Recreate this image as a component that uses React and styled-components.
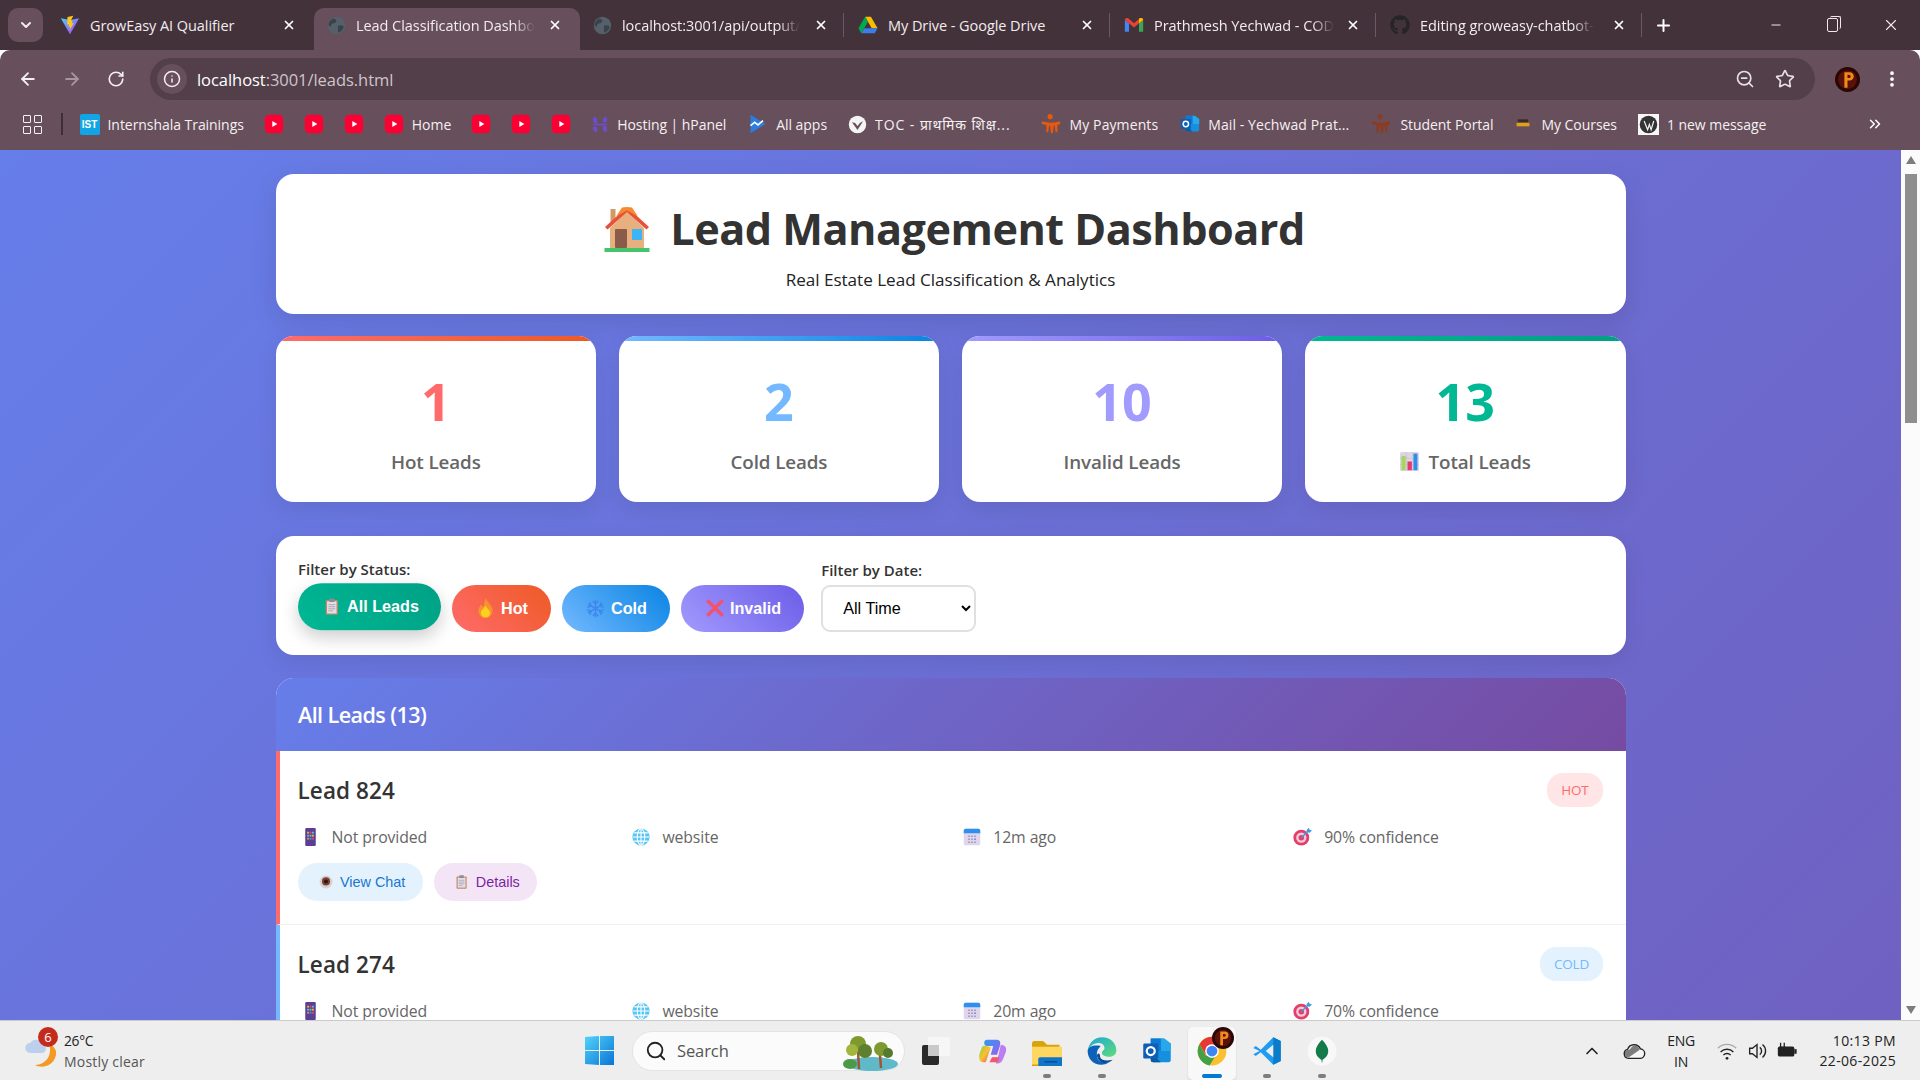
import React from 'react';
import styled, { createGlobalStyle } from 'styled-components';
import { ChevronDown, X, Plus, Minus, ArrowLeft, ArrowRight, RotateCw, Info, ZoomOut, Star, MoreVertical, ChevronsRight, ChevronUp, Search } from 'lucide-react';
import { FaGithub } from 'react-icons/fa';

const UI = `"Open Sans", "Noto Sans", sans-serif`;
const ARIAL = `"Liberation Sans", Arial, sans-serif`;

const Global = createGlobalStyle`
  html, body { margin: 0; height: 100%; overflow: hidden; }
  #root { height: 100vh; }
  * { box-sizing: border-box; }
`;

/* ---------- drawings ---------- */
const Svg = ({ s = 16, w, vb = '0 0 24 24', children }) => (
  <svg width={w || s} height={s} viewBox={vb} style={{ display: 'block', flex: 'none' }}>{children}</svg>
);
const VitePic = ({ s }) => (<Svg s={s}><defs><linearGradient id="vt" x1="0" y1="0" x2="1" y2="1"><stop offset="0" stopColor="#41d1ff" /><stop offset="1" stopColor="#bd34fe" /></linearGradient></defs><path d="M1 4l11 19L23 4l-11 2z" fill="url(#vt)" /><path d="M16 1l-7 1.5-.6 9 2.2-.5-.5 3.5 2-.5-.6 4.5 5-9-2.4.5.9-4-2 .5z" fill="#ffc517" /></Svg>);
const WorldPic = ({ s }) => (<Svg s={s}><circle cx="12" cy="12" r="11" fill="#55606a" /><path d="M8 3c4 1 5 3 3 5s-5 1-6 4-2 1-3-1c0-3 3-7 6-8zM15 12c3-1 6 0 6 2s-3 6-6 7c-2-1-1-3-1-5s-1-3 1-4z" fill="#39434c" /></Svg>);
const DrivePic = ({ s }) => (<Svg s={s}><path d="M8.5 2h7l8 14h-7z" fill="#fbbc04" /><path d="M8.5 2L.5 16l3.5 6 8-14z" fill="#00a84f" /><path d="M4 22h16l3.5-6h-16z" fill="#3b7de9" /></Svg>);
const GmailPic = ({ s }) => (<Svg s={s}><path d="M1 6v14h5V10z" fill="#4285f4" /><path d="M23 6v14h-5V10z" fill="#34a853" /><path d="M1 6c0-2 2-3 4-2l7 6 7-6c2-1 4 0 4 2l-5 4-6 5-6-5z" fill="#ea4335" /><path d="M18 4.500l1-.5c2-1 4 0 4 2l-5 4z" fill="#fbbc04" /></Svg>);
const YtPic = () => (<Svg s={20}><rect x="1" y="1" width="22" height="22" rx="5" fill="#fb0032" /><path d="M10 8.500l6 3.500-6 3.500z" fill="#fff" /></Svg>);
const IstPic = () => (<YtBase><span>IST</span></YtBase>);
const HostingerPic = () => (<Svg s={21} w={18}><path d="M3 1l5 3v7l-5-2zM21 1l-5 3v5h5zM3 11h18v2H3zM3 15h5v8l-5-3zM16 13l5 2v8l-5-3z" fill="#6c4dd8" /></Svg>);
const AllAppsPic = () => (<Svg s={22} w={20}><path d="M3 1l18 11L3 23z" fill="#2a7de1" /><path d="M3 14l5-4 4 3 6-5" stroke="#fff" strokeWidth="2" fill="none" /></Svg>);
const TocPic = () => (<Svg s={19}><circle cx="12" cy="12" r="11" fill="#f4f4f4" /><path d="M5 9l7 10 7-11-4 2-3 4-3-4z" fill="#67505b" /></Svg>);
const PayPic = ({ c = '#e8590c' }) => (<Svg s={22} w={22}><circle cx="11" cy="4" r="2.800" fill={c} /><path d="M2 9c6 2 14 2 20 0v3l-3 1v8h-2l-1-7h-1l-1 8h-2l-1-8h-1l-1 7H7v-8l-5-1z" fill={c} /></Svg>);
const OutlookPic = ({ s = 20 }) => (<Svg s={s}><path d="M7 2h10l6 4v13a2 2 0 01-2 2H9a2 2 0 01-2-2z" fill="#1490df" /><path d="M15 2h3l5 4v6h-8z" fill="#28a8ea" /><path d="M7 13l8 8H9a2 2 0 01-2-2z" fill="#0a5a9e" /><path d="M7 2h8v10H7z" fill="#0f78d4" /><rect x="1" y="6" width="12" height="12" rx="1" fill="#0c5fb5" /><circle cx="7" cy="12" r="3.200" fill="none" stroke="#fff" strokeWidth="1.800" /></Svg>);
const CoursePic = () => (<Svg s={14} w={20}><rect x="3" y="4" width="18" height="5" fill="#3a2b2b" /><rect x="1" y="10" width="22" height="6" fill="#e1a015" /></Svg>);
const WpPic = () => (<Svg s={21}><rect width="24" height="24" fill="#f7f7f7" /><circle cx="12" cy="12" r="10" fill="#333" /><path d="M7 8l4 10 2-6 2 6 3-10" stroke="#eee" strokeWidth="1.400" fill="none" /></Svg>);
const HousePic = () => (
  <Svg s={46} vb="0 0 46 46">
    <path d="M6 22L23 5l17 17v20H6z" fill="#e8b07f" />
    <rect x="6.500" y="3" width="5" height="13" fill="#d39a63" />
    <path d="M1 21L23 1l22 20-2.500 2.500L23 6 3.500 23.500z" fill="#e8503a" />
    <path d="M18 1.500L23 1l5 .5 6 9-11-6-11 6z" fill="#f68a2e" />
    <rect x="11" y="23" width="12" height="19" rx="1" fill="#8a5a4b" />
    <rect x="28" y="23" width="10" height="11" rx="1" fill="#3db4f5" />
    <rect x="0.500" y="42" width="45" height="4" fill="#45c46b" />
  </Svg>
);
const ClipPic = ({ s = 17 }) => (<Svg s={s} w={s * 0.8} vb="0 0 20 24"><rect x="1" y="2" width="18" height="22" rx="1.500" fill="#b98a67" /><rect x="3" y="4" width="14" height="18" fill="#e3dde6" /><rect x="6" y="0" width="8" height="5" rx="1" fill="#8f8a96" /><path d="M5 9h10M5 12h10M5 15h10M5 18h7" stroke="#a9a3b3" strokeWidth="1.300" /></Svg>);
const FirePic = () => (<Svg s={20} w={15} vb="0 0 18 24"><path d="M9.500 0c1 5 8 8 8 15.500a8.500 8.500 0 01-17 0c0-4 2-5 3-8 1 2 2 3 3 3 1-3 1-7 3-10.500z" fill="#f8922c" /><path d="M9 9c1.500 4 5.500 5 5.500 9a5.500 5.500 0 01-11 0c0-4 4-5 5.500-9z" fill="#fdd020" /></Svg>);
const FlakePic = () => (<Svg s={19}><g stroke="#3f86ee" strokeWidth="1.700" fill="none"><path d="M12 1v22M2.500 6.500l19 11M21.500 6.500l-19 11" /><path d="M8.500 2.500L12 6l3.500-3.500M8.500 21.500L12 18l3.500 3.500M1.500 10.500L6.500 9 5 4M22.500 13.500L17.500 15 19 20M22.500 10.500L17.500 9 19 4M1.500 13.500L6.500 15 5 20" /></g></Svg>);
const CrossPic = () => (<Svg s={18}><path d="M3 3l18 18M21 3L3 21" stroke="#f4516f" strokeWidth="4.500" strokeLinecap="round" /></Svg>);
const ChartPic = () => (<Svg s={19}><rect width="24" height="24" rx="2" fill="#dcd6e4" /><path d="M8 0v24M16 0v24M0 8h24M0 16h24" stroke="#c3bccf" strokeWidth=".800" /><rect x="2" y="5" width="5" height="18" fill="#a5d85a" /><rect x="9.500" y="12" width="5.500" height="11" fill="#e8386d" /><rect x="17" y="2" width="5" height="21" fill="#2f8fe8" /></Svg>);
const PhonePic = () => (<Svg s={18} w={13} vb="0 0 14 24"><rect width="14" height="24" rx="1.500" fill="#5b3f93" /><g><rect x="2.500" y="5" width="2.500" height="2.500" fill="#f3b234" /><rect x="5.800" y="5" width="2.500" height="2.500" fill="#e0466e" /><rect x="9" y="5" width="2.500" height="2.500" fill="#4cc1e8" /><rect x="2.500" y="9" width="2.500" height="2.500" fill="#4cc1e8" /><rect x="5.800" y="9" width="2.500" height="2.500" fill="#6fd06b" /><rect x="9" y="9" width="2.500" height="2.500" fill="#f3b234" /><rect x="2.500" y="13" width="2.500" height="2.500" fill="#f28a3d" /><rect x="5.800" y="13" width="2.500" height="2.500" fill="#4c8df0" /><rect x="9" y="13" width="2.500" height="2.500" fill="#e0466e" /></g></Svg>);
const GlobePic = () => (<Svg s={18}><circle cx="12" cy="12" r="11.500" fill="#58c6f5" /><g fill="none" stroke="#fff" strokeWidth="1.400"><ellipse cx="12" cy="12" rx="5" ry="11" /><path d="M12 1v22M1 12h22M3 6.500h18M3 17.500h18" /></g></Svg>);
const CalPic = () => (<Svg s={18}><rect x="1" y="1" width="22" height="22" rx="2.500" fill="#dfd5ec" /><path d="M1 7V3.500A2.500 2.500 0 013.500 1h17A2.500 2.500 0 0123 3.500V7z" fill="#2f8ff0" /><g fill="#9b90ad"><rect x="7" y="10" width="2" height="2" /><rect x="11" y="10" width="2" height="2" /><rect x="15" y="10" width="2" height="2" /><rect x="7" y="14" width="2" height="2" /><rect x="11" y="14" width="2" height="2" /><rect x="15" y="14" width="2" height="2" fill="#2f8ff0" /><rect x="7" y="18" width="2" height="2" /><rect x="11" y="18" width="2" height="2" /><rect x="15" y="18" width="2" height="2" /></g></Svg>);
const TargetPic = () => (<Svg s={19}><circle cx="10.500" cy="13.500" r="10" fill="#e23f6c" /><circle cx="10.500" cy="13.500" r="6.500" fill="#f3cdd6" /><circle cx="10.500" cy="13.500" r="3.500" fill="#e23f6c" /><path d="M10.500 13.500L20 4" stroke="#3d9be9" strokeWidth="1.800" /><path d="M17 4l3-3 1 2.500 3 .8-3 3-3-.8z" fill="#3d9be9" /></Svg>);
const EyePic = () => (<Svg s={14}><circle cx="12" cy="12" r="11" fill="#d8d0d2" /><circle cx="12" cy="11" r="7" fill="#7a4035" /><circle cx="12" cy="11" r="3.500" fill="#2a1510" /></Svg>);
const WeatherPic = () => (<Svg s={34} w={32} vb="0 0 32 34"><path d="M24 10c3 8 0 20-14 21 5 3 18 3 21-10 1-5-2-9-7-11z" fill="#f49a24" /><path d="M5 19a5 5 0 01.5-10 6 6 0 0111 1 4.500 4.500 0 010 9z" fill="#bcd0ee" /></Svg>);
const WinPic = () => (<Svg s={29} w={29} vb="0 0 29 29"><defs><linearGradient id="wn" x1="0" y1="0" x2="1" y2="1"><stop offset="0" stopColor="#52d3fa" /><stop offset="1" stopColor="#0a74d6" /></linearGradient></defs><path d="M0 1l14-1v14H0zM15 0h14v14H15zM0 15h14v14l-14-1zM15 15h14v14H15z" fill="url(#wn)" /></Svg>);
const ScenePic = () => (<Svg s={40} w={56} vb="0 0 56 40"><ellipse cx="30" cy="33" rx="26" ry="7" fill="#5fb9c9" /><path d="M16 20l1 18M38 24l1 13" stroke="#a3552f" strokeWidth="2.500" /><circle cx="16" cy="13" r="8" fill="#7e9a2e" /><circle cx="10" cy="19" r="6" fill="#a2b63d" /><circle cx="23" cy="20" r="7" fill="#5c8030" /><circle cx="39" cy="18" r="7" fill="#7e9a2e" /><circle cx="46" cy="22" r="5" fill="#557a2d" /><ellipse cx="8" cy="33" rx="7" ry="5" fill="#4c9a48" /></Svg>);
const TaskViewPic = () => (<Svg s={28} w={30} vb="0 0 30 28"><rect x="7" y="0" width="22" height="19" rx="2" fill="#f6f6f6" /><rect x="1" y="8" width="17" height="20" rx="2" fill="#2a2a2a" /><rect x="7" y="8" width="11" height="11" fill="#c9c9c9" /></Svg>);
const CopilotPic = () => (<Svg s={30}><defs><linearGradient id="cpa" x1="0" y1="0" x2="1" y2="1"><stop offset="0" stopColor="#2e9bf0" /><stop offset="1" stopColor="#9a5cf0" /></linearGradient><linearGradient id="cpb" x1="0" y1="0" x2="1" y2="1"><stop offset="0" stopColor="#86d24e" /><stop offset=".5" stopColor="#f8c22e" /><stop offset="1" stopColor="#f0486b" /></linearGradient></defs><path d="M8 3h8c3 0 3 3 2 6l-2 6h-5l2-7H8C5 8 5 3 8 3z" fill="url(#cpa)" /><path d="M19 7c4 0 5 3 4 6l-2 5c-1 3-3 4-5 4h-1l2-6 2-9z" fill="#bb7df0" /><path d="M4 9c-1 3-3 6-2 9 0 2 1 3 4 3h1l2-6 2-6c-3-1-6-2-7 0z" fill="url(#cpb)" /><path d="M7 21h8c1 0 1 0 2-1l1-3h-6l-2 4z" fill="#f4566a" /></Svg>);
const FilesPic = () => (<Svg s={30}><path d="M0 6a2 2 0 012-2h7l3 3h10v17H0z" fill="#d9a30c" /><path d="M0 8h24v15H0z" fill="#fdd75f" transform="translate(0 1) scale(1.250 .95)" /><rect x="5" y="17" width="20" height="8" rx="1.500" fill="#1274c9" /><rect x="10" y="20" width="10" height="1.200" fill="#064f91" /></Svg>);
const EdgePic = () => (<Svg s={30}><defs><linearGradient id="eg" x1="0" y1="0" x2="1" y2="1"><stop offset="0" stopColor="#1aa7d8" /><stop offset="1" stopColor="#5fdc7a" /></linearGradient></defs><path d="M12 1c7 0 11.500 5 11.500 10.500 0 3-2.500 5-5.500 5s-6-1-6-3c0-2 2-2 2-4 0-3-3-4-5-4C5 5.500 1 9 .5 12 1 6 6 1 12 1z" fill="url(#eg)" /><path d="M.5 12C.5 18 5 23 11.500 23c2 0 4-.5 6-2-4 1-9 0-9.500-5C7.500 12 9 10 11 8c-5-1-10 0-10.500 4z" fill="#0c62b8" /><path d="M8 15c0 5 5 8 9.500 6 1-.5 2-1 3-2-4 1-9 1-10-2 0-3-1-4-2.500-2z" fill="#084a94" /></Svg>);
const ChromePic = () => (<Svg s={30}><circle cx="12" cy="12" r="11.500" fill="#fbc02d" /><path d="M12 .5A11.500 11.500 0 002 6.500l5 8.500 5-7h10A11.500 11.500 0 0012 .5z" fill="#e53935" /><path d="M2 6.500a11.500 11.500 0 008 17l5-8-8 0z" fill="#43a047" /><circle cx="12" cy="12" r="5.500" fill="#fff" /><circle cx="12" cy="12" r="4.300" fill="#3f86f4" /></Svg>);
const AvatarPic = ({ s }) => (<Svg s={s}><circle cx="12" cy="12" r="12" fill="#2a0705" /><circle cx="12" cy="12" r="9" fill="#5a1208" /><path d="M9 5h5a4 4 0 010 8h-2v7h-3zM12 7.500v3h1.500a1.500 1.500 0 000-3z" fill="#f08a1d" /></Svg>);
const VsPic = () => (<Svg s={30}><path d="M17 1l6 3v16l-6 3L7 13l-4 3-2-1.500 5-2.500-5-2.500L3 8l4 3z" fill="#1f9cf0" /><path d="M17 1v22l6-3V4z" fill="#0a7cc9" /><path d="M17 7l-6 5 6 5z" fill="#eeeeee" /></Svg>);
const MongoPic = () => (<Svg s={30}><circle cx="12" cy="12" r="11.500" fill="#f8f8f8" /><path d="M12 3c3 3 5 6 5 9 0 4-3 6-4.500 7l-.5 3-.5-3C10 18 7 16 7 12c0-3 2-6 5-9z" fill="#127b49" /></Svg>);
const CloudPic = () => (<Svg s={22} w={24}><path d="M6 20a5 5 0 01-1-9.800 7.500 7.500 0 0114-.5 5 5 0 01-1 10.300z" fill="#f5f5f5" stroke="#222" strokeWidth="1.500" /><path d="M6 19a4 4 0 010-8c2 0 3-5 7-5 3 0 5 3 5 5z" fill="#7c7c7c" /></Svg>);
const WifiPic = () => (<Svg s={22}><g fill="none" stroke="#222" strokeWidth="1.500"><path d="M2 9a14 14 0 0120 0" stroke="#aaa" /><path d="M5 13a10 10 0 0114 0" /><path d="M8 16.500a5.500 5.500 0 018 0" /></g><circle cx="12" cy="20" r="1.500" fill="#222" /></Svg>);
const VolPic = () => (<Svg s={22}><path d="M4 9h3l5-4v14l-5-4H4z" fill="none" stroke="#222" strokeWidth="1.500" /><path d="M15 8a5 5 0 010 8M18 5a9 9 0 010 14" fill="none" stroke="#222" strokeWidth="1.500" /></Svg>);
const BatPic = () => (<Svg s={22}><rect x="2" y="7" width="18" height="11" rx="2" fill="#222" /><rect x="20" y="10" width="2.500" height="5" fill="#222" /><path d="M5 3v5M9 3v5M3.500 8h7" stroke="#222" strokeWidth="1.400" /></Svg>);

/* ---------- window chrome ---------- */
const Shell = styled.div`display: flex; flex-direction: column; height: 100vh; overflow: hidden; font-family: ${UI};`;
const TabStrip = styled.div`display: flex; align-items: flex-end; height: 50px; background: #43323a; padding-left: 8px; position: relative;`;
const TabListBtn = styled.div`
  width: 35px; height: 34px; margin-bottom: 8px; margin-right: 5px; border-radius: 10px;
  background: #674f5b; color: #f2eaee; display: flex; align-items: center; justify-content: center;
`;
const Tab = styled.div`
  width: 266px; height: 42px; display: flex; align-items: center; padding: 0 0 8px 12px; position: relative;
  border-radius: 10px 10px 0 0; color: #f2ecef; font-size: 14.5px; letter-spacing: -0.06px;
  background: ${p => (p.$active ? '#674f5b' : 'transparent')};
  ${p => p.$sep && `&::after { content: ''; position: absolute; right: 2px; top: 5px; height: 24px; width: 1.5px; background: #6d5863; }`}
`;
const TabIcon = styled.span`width: 20px; display: flex; justify-content: center; flex: none; margin-right: 10px;`;
const TabTitleBox = styled.span`width: 186px; flex: none; display: flex;`;
const TabTitle = styled.span`
  white-space: nowrap;
  ${p => p.$fade && `mask-image: linear-gradient(to right, #000 88%, transparent);`}
`;
const TabClose = styled.span`margin-left: 6px; display: flex; color: #fff;`;
const NewTab = styled.div`margin-left: 10px; height: 42px; padding-bottom: 8px; display: flex; align-items: center; color: #fff;`;
const WinCtrls = styled.div`margin-left: auto; height: 50px; display: flex; align-items: center; color: #f0e8ec; padding-right: 20px; gap: 43.8px;`;
const RestoreIcon = styled.span`
  width: 11px; height: 14px; border: 1.3px solid #f0e8ec; border-radius: 2px; position: relative; display: block;
  &::after { content: ''; position: absolute; top: -3px; left: 2px; width: 10px; height: 12px; border: 1.300px solid #f0e8ec; border-left: 0; border-bottom: 0; border-radius: 2px; }
`;
const Toolbar = styled.div`height: 58px; background: #674f5b; border-radius: 10px 10px 0 0; display: flex; align-items: center; padding: 0 18px; color: #f4eef1;`;
const NavBtn = styled.span`width: 20px; display: flex; justify-content: center; margin-right: ${p => p.$mr || 24}px; color: ${p => (p.$off ? '#a8959f' : '#f4eef1')};`;
const Omnibox = styled.div`flex: 1; height: 42px; margin-right: 20px; border-radius: 21px; background: #523f4a; display: flex; align-items: center; padding: 0 20px 0 7px;`;
const InfoChip = styled.span`width: 30px; height: 30px; border-radius: 50%; background: #674f5b; display: flex; align-items: center; justify-content: center; margin-right: 10px;`;
const Url = styled.span`font-size: 16.5px; letter-spacing: -0.05px; color: #cfc5ca; flex: 1; b { font-weight: 400; color: #fff; }`;
const OmniIcons = styled.span`display: flex; gap: 20px; align-items: center; color: #e8dfe3;`;
const MenuBtn = styled.span`margin-left: 22px; display: flex; color: #fff;`;
const Bookmarks = styled.div`height: 42px; padding: 0 0 10px 23px; background: #674f5b; display: flex; align-items: center; gap: 20px; color: #f5f0f2; font-size: 14px;`;
const AppsGrid = styled.span`display: grid; grid-template-columns: 8px 8px; gap: 3px; span { border: 1.600px solid #f5f0f2; height: 8px; border-radius: 1px; }`;
const BarSep = styled.span`width: 1.500px; height: 22px; background: #3e2e36; margin: 0 -3px 0 -1px;`;
const Mark = styled.span`display: flex; align-items: center; gap: 8px; white-space: nowrap; flex: none; letter-spacing: ${p => p.$ls ?? -0.05}px; margin-left: ${p => p.$ml || 0}px;`;
const YtBase = styled.span`
  width: 20px; height: 21px; border-radius: 2px; background: #12a5e6; color: #fff; display: flex; align-items: center; justify-content: center;
  font: 700 10px ${ARIAL}; letter-spacing: 0;
`;
const MoreMarks = styled.span`margin-left: auto; padding-right: 36px; display: flex; color: #fff;`;

/* ---------- page ---------- */
const PageRow = styled.div`flex: 1; min-height: 0; display: flex;`;
const Viewport = styled.div`flex: 1; overflow: hidden;`;
const PageBody = styled.div`min-height: 2937px; background: linear-gradient(135deg, #667eea 0%, #764ba2 100%); padding-top: 24px;`;
const Container = styled.div`width: 1350px; margin: 0 auto;`;
const Hero = styled.header`
  height: 140px; background: #fff; border-radius: 18px; text-align: center; padding-top: 29px;
  box-shadow: 0 9px 27px rgba(0,0,0,.1);
`;
const HeroTitle = styled.h1`
  margin: 0; font-size: 43.2px; line-height: 52px; font-weight: 700; color: #333; letter-spacing: -0.5px;
  display: flex; justify-content: center; align-items: center; gap: 20px; padding-left: 8px;
`;
const HeroSub = styled.p`margin: 13px 0 0; font-size: 17.1px; line-height: 24px; color: #222; letter-spacing: -0.02px;`;
const StatRow = styled.section`display: grid; grid-template-columns: repeat(4, 1fr); gap: 22.5px; margin-top: 22px;`;
const StatCard = styled.div`
  height: 166px; background: #fff; border-radius: 18px; overflow: hidden; text-align: center; position: relative;
  box-shadow: 0 7px 22px rgba(0,0,0,.08); padding-top: 32.5px;
  &::before { content: ''; position: absolute; left: 0; right: 0; top: 0; height: 4.5px; background: linear-gradient(90deg, ${p => p.$a}, ${p => p.$b}); }
`;
const StatValue = styled.div`font-size: 52px; line-height: 64px; font-weight: 700; color: ${p => p.$c};`;
const StatLabel = styled.div`
  margin-top: 16px; font-size: 18.8px; line-height: 26px; font-weight: 600; color: #666; letter-spacing: -0.1px;
  display: flex; justify-content: center; align-items: center; gap: 10px;
`;
const FilterCard = styled.section`
  margin-top: 34px; height: 119px; background: #fff; border-radius: 18px; padding: 22.5px; display: flex; align-items: flex-start; gap: 17px;
  box-shadow: 0 7px 22px rgba(0,0,0,.08);
`;
const FilterGroup = styled.div`display: flex; flex-direction: column; padding-top: ${p => p.$pt || 0}px;`;
const FilterLabel = styled.label`font-size: 15px; line-height: 20px; font-weight: 600; color: #333; letter-spacing: 0; margin-bottom: ${p => p.$mb || 6}px;`;
const FilterRow = styled.div`display: flex; gap: 11px;`;
const FilterBtn = styled.button`
  height: 47.5px; border: 0; border-radius: 24px; padding: 0 ${p => (p.$active ? 22 : 23)}px 0 23.5px; color: #fff; font: 700 16.2px ${ARIAL};
  display: flex; align-items: center; background: linear-gradient(45deg, ${p => p.$a}, ${p => p.$b});
  ${p => p.$active && `transform: translateY(-1.800px); box-shadow: 0 7px 18px rgba(0,0,0,.2);`}
`;
const BtnIcon = styled.span`width: 21px; margin-right: 4.5px; display: flex; justify-content: center;`;
const DateSelect = styled.select`
  width: 155px; height: 47px; border: 2.7px solid #e0e0e0; border-radius: 9px; background: #fff; color: #000;
  font: 400 16.2px ${ARIAL}; padding: 0 3px 0 16px;
`;
const LeadsPanel = styled.section`margin-top: 22.5px; background: #fff; border-radius: 18px; overflow: hidden;`;
const LeadsHead = styled.div`
  height: 73px; padding: 0 22.5px; display: flex; align-items: center; color: #fff;
  background: linear-gradient(135deg, #667eea 0%, #764ba2 100%);
`;
const LeadsTitle = styled.h2`margin: 0; font-size: 21.6px; font-weight: 600; letter-spacing: -0.6px;`;
const LeadItem = styled.article`
  height: 174px; padding: 22px 22.5px 0 18px; border-left: 4.5px solid ${p => p.$c}; border-bottom: 1.2px solid #f0f0f0;
`;
const LeadTop = styled.div`display: flex; justify-content: space-between; align-items: center; height: 34px;`;
const LeadName = styled.h3`margin: 0; padding-top: 2.5px; font-size: 22.5px; font-weight: 600; color: #333; letter-spacing: 0.1px;`;
const Badge = styled.span`
  height: 34px; display: flex; align-items: center; padding: 0 ${p => p.$px}px; border-radius: 16px;
  font-size: 13.5px; font-weight: 500; letter-spacing: -0.2px; color: ${p => p.$c}; background: ${p => p.$bg};
`;
const MetaGrid = styled.div`display: grid; grid-template-columns: repeat(4, 1fr); gap: 18px; margin-top: 19px;`;
const MetaItem = styled.div`display: flex; align-items: center; height: 22px; font-size: 15.8px; color: #666; letter-spacing: -0.1px;`;
const MetaIcon = styled.span`width: 25px; margin-right: 9px; display: flex; justify-content: center;`;
const ActionRow = styled.div`display: flex; gap: 10.5px; margin-top: 15px;`;
const ActionBtn = styled.button`
  height: 38px; border: 0; border-radius: 19px; padding: 1px ${p => p.$px}px 0; display: flex; align-items: center;
  font: 400 14.4px ${ARIAL}; color: ${p => p.$c}; background: ${p => p.$bg};
`;
const ActionIcon = styled.span`width: 20.5px; margin-right: 4px; display: flex; justify-content: center;`;
const ScrollBar = styled.div`width: 19px; background: #fbfbfb; display: flex; flex-direction: column; align-items: center;`;
const ScrollArrow = styled.span`
  flex: none; margin: ${p => (p.$down ? 'auto 0 6px' : '6px 0 10px')}; width: 0; height: 0; border-left: 5.5px solid transparent; border-right: 5.5px solid transparent;
  ${p => (p.$down ? 'border-top: 8px solid #7d7d7d;' : 'border-bottom: 8px solid #7d7d7d;')}
`;
const ScrollThumb = styled.span`width: 12px; height: 249px; background: #8e8e8e; flex: none;`;

/* ---------- taskbar ---------- */
const Taskbar = styled.footer`height: 60px; flex: none; background: #eeeeee; border-top: 1px solid #cbcbcb; display: flex; align-items: center; padding: 0 24px 0 25px; color: #222;`;
const Weather = styled.div`width: 560px; flex: none; display: flex; align-items: center; position: relative;`;
const WeatherBadge = styled.span`
  position: absolute; left: 13px; top: -3px; width: 20px; height: 20px; border-radius: 50%; background: #c42b1c; color: #fff;
  font-size: 13px; display: flex; align-items: center; justify-content: center;
`;
const WeatherText = styled.div`margin-left: 7px; font-size: 13.8px; line-height: 21px; letter-spacing: -0.3px; small { display: block; font-size: 14px; color: #555; letter-spacing: 0.2px; }`;
const SearchPill = styled.div`
  width: 273px; height: 40px; margin-left: 18px; margin-right: 16px; border-radius: 20px; background: #fbfbfb; border: 1px solid #e4e4e4;
  display: flex; align-items: center; padding: 0 6px 0 12px; font-size: 16.5px; color: #555; letter-spacing: -0.1px;
  svg:first-child { color: #222; }
  span { margin-left: 10px; flex: 1; }
`;
const AppIcon = styled.div`
  width: 30px; height: 30px; margin-left: ${p => p.$ml ?? 25}px; flex: none; position: relative;
  ${p => p.$tile && `&::before { content: ''; position: absolute; inset: -9px -9px -14px; border-radius: 5px; background: #f8f8f8; box-shadow: 0 1px 2px rgba(0,0,0,.12); }`}
  & > svg { position: relative; }
`;
const RunDot = styled.span`
  position: absolute; left: 50%; bottom: -12px; height: 4px; transform: translateX(-50%); border-radius: 2px;
  width: ${p => (p.$on ? 20 : 8)}px; background: ${p => (p.$on ? '#0078d4' : '#7d7d7d')};
`;
const AppBadge = styled.span`position: absolute; top: -9px; right: -7px;`;
const Tray = styled.div`margin-left: auto; display: flex; align-items: center; font-size: 14px; letter-spacing: -0.25px;`;
const TrayCell = styled.span`width: ${p => p.$w}px; margin-right: ${p => p.$mr}px; display: flex; justify-content: center; flex: none;`;
const Lang = styled.span`width: 36px; margin-right: 17px; text-align: center; line-height: 21px;`;
const Clock = styled.span`width: 98px; text-align: right; line-height: 20px; letter-spacing: 0.35px;`;

/* ---------- data ---------- */
const TABS = [
  { t: 'GrowEasy AI Qualifier', i: <VitePic s={20} /> },
  { t: 'Lead Classification Dashbo', i: <WorldPic s={19} />, active: true, fade: true },
  { t: 'localhost:3001/api/output/', i: <WorldPic s={19} />, sep: true, fade: true },
  { t: 'My Drive - Google Drive', i: <DrivePic s={20} />, sep: true },
  { t: 'Prathmesh Yechwad - COD', i: <GmailPic s={20} />, sep: true, fade: true },
  { t: 'Editing groweasy-chatbot-', i: <FaGithub size={20} color="#252525" />, sep: true, fade: true },
];
const MARKS = [
  { i: <IstPic />, t: 'Internshala Trainings' }, { i: <YtPic /> }, { i: <YtPic /> }, { i: <YtPic /> },
  { i: <YtPic />, t: 'Home' }, { i: <YtPic /> }, { i: <YtPic /> }, { i: <YtPic /> },
  { i: <HostingerPic />, t: 'Hosting | hPanel' }, { i: <AllAppsPic />, t: 'All apps', ml: 2 },
  { i: <TocPic />, t: 'TOC - प्राथमिक शिक्ष...', ls: 0.95, ml: 1 }, { i: <PayPic />, t: 'My Payments', ml: 9, ls: 0.1 },
  { i: <OutlookPic />, t: 'Mail - Yechwad Prat...', ml: 2, ls: 0.1 }, { i: <PayPic c="#8c3a22" />, t: 'Student Portal', ml: 1 },
  { i: <CoursePic />, t: 'My Courses' }, { i: <WpPic />, t: '1 new message', ml: 1 },
];
const STATS = [
  { v: 1, l: 'Hot Leads', a: '#ff6b6b', b: '#ee5a24', c: '#ff6b6b' },
  { v: 2, l: 'Cold Leads', a: '#74b9ff', b: '#0984e3', c: '#74b9ff' },
  { v: 10, l: 'Invalid Leads', a: '#a29bfe', b: '#6c5ce7', c: '#a29bfe' },
  { v: 13, l: 'Total Leads', a: '#00b894', b: '#00a085', c: '#00b894', icon: <ChartPic /> },
];
const FILTERS = [
  { l: 'All Leads', i: <ClipPic />, a: '#00b894', b: '#00a085', active: true },
  { l: 'Hot', i: <FirePic />, a: '#ff6b6b', b: '#ee5a24' },
  { l: 'Cold', i: <FlakePic />, a: '#74b9ff', b: '#0984e3' },
  { l: 'Invalid', i: <CrossPic />, a: '#a29bfe', b: '#6c5ce7' },
];
const LEADS = [
  { n: 'Lead 824', s: 'HOT', c: '#ff6b6b', bg: '#ffe5e5', px: 14.5, ago: '12m ago', conf: '90% confidence' },
  { n: 'Lead 274', s: 'COLD', c: '#74b9ff', bg: '#e3f2fd', px: 14, ago: '20m ago', conf: '70% confidence' },
];
const APPS = [
  { i: <CopilotPic />, ml: 26 }, { i: <FilesPic />, dot: true }, { i: <EdgePic />, dot: true }, { i: <OutlookPic s={30} /> },
  { i: <ChromePic />, tile: true, on: true, badge: true }, { i: <VsPic />, dot: true }, { i: <MongoPic />, dot: true },
];

export default function App() {
  return (
    <Shell>
      <Global />
      <TabStrip>
        <TabListBtn><ChevronDown size={16} strokeWidth={3} /></TabListBtn>
        {TABS.map(t => (
          <Tab key={t.t} $active={t.active} $sep={t.sep}>
            <TabIcon>{t.i}</TabIcon>
            <TabTitleBox><TabTitle $fade={t.fade}>{t.t}</TabTitle></TabTitleBox>
            <TabClose><X size={14} strokeWidth={3} /></TabClose>
          </Tab>
        ))}
        <NewTab><Plus size={19} strokeWidth={2.5} /></NewTab>
        <WinCtrls>
          <Minus size={14} />
          <RestoreIcon />
          <X size={18} strokeWidth={1.5} />
        </WinCtrls>
      </TabStrip>
      <Toolbar>
        <NavBtn><ArrowLeft size={20} strokeWidth={2.2} /></NavBtn>
        <NavBtn $off><ArrowRight size={20} strokeWidth={2.2} /></NavBtn>
        <NavBtn $mr={24}><RotateCw size={18} strokeWidth={2.2} /></NavBtn>
        <Omnibox>
          <InfoChip><Info size={18} /></InfoChip>
          <Url><b>localhost</b>:3001/leads.html</Url>
          <OmniIcons><ZoomOut size={20} /><Star size={20} /></OmniIcons>
        </Omnibox>
        <AvatarPic s={25} />
        <MenuBtn><MoreVertical size={20} strokeWidth={2.5} /></MenuBtn>
      </Toolbar>
      <Bookmarks>
        <AppsGrid><span /><span /><span /><span /></AppsGrid>
        <BarSep />
        {MARKS.map((m, idx) => (<Mark key={idx} $ls={m.ls} $ml={m.ml}>{m.i}{m.t && <span>{m.t}</span>}</Mark>))}
        <MoreMarks><ChevronsRight size={18} /></MoreMarks>
      </Bookmarks>

      <PageRow>
        <Viewport>
          <PageBody>
            <Container>
              <Hero>
                <HeroTitle><HousePic />Lead Management Dashboard</HeroTitle>
                <HeroSub>Real Estate Lead Classification &amp; Analytics</HeroSub>
              </Hero>
              <StatRow>
                {STATS.map(s => (
                  <StatCard key={s.l} $a={s.a} $b={s.b}>
                    <StatValue $c={s.c}>{s.v}</StatValue>
                    <StatLabel>{s.icon}{s.l}</StatLabel>
                  </StatCard>
                ))}
              </StatRow>
              <FilterCard>
                <FilterGroup>
                  <FilterLabel>Filter by Status:</FilterLabel>
                  <FilterRow>
                    {FILTERS.map(f => (
                      <FilterBtn key={f.l} $a={f.a} $b={f.b} $active={f.active}>
                        <BtnIcon>{f.i}</BtnIcon>{f.l}
                      </FilterBtn>
                    ))}
                  </FilterRow>
                </FilterGroup>
                <FilterGroup $pt={1}>
                  <FilterLabel $mb={5}>Filter by Date:</FilterLabel>
                  <DateSelect defaultValue="all"><option value="all">All Time</option></DateSelect>
                </FilterGroup>
              </FilterCard>
              <LeadsPanel>
                <LeadsHead><LeadsTitle>All Leads (13)</LeadsTitle></LeadsHead>
                {LEADS.map(l => (
                  <LeadItem key={l.n} $c={l.c}>
                    <LeadTop>
                      <LeadName>{l.n}</LeadName>
                      <Badge $c={l.c} $bg={l.bg} $px={l.px}>{l.s}</Badge>
                    </LeadTop>
                    <MetaGrid>
                      <MetaItem><MetaIcon><PhonePic /></MetaIcon>Not provided</MetaItem>
                      <MetaItem><MetaIcon><GlobePic /></MetaIcon>website</MetaItem>
                      <MetaItem><MetaIcon><CalPic /></MetaIcon>{l.ago}</MetaItem>
                      <MetaItem><MetaIcon><TargetPic /></MetaIcon>{l.conf}</MetaItem>
                    </MetaGrid>
                    <ActionRow>
                      <ActionBtn $px={18} $c="#1976d2" $bg="#e3f2fd"><ActionIcon><EyePic /></ActionIcon>View Chat</ActionBtn>
                      <ActionBtn $px={17.5} $c="#7b1fa2" $bg="#f3e5f5"><ActionIcon><ClipPic s={14} /></ActionIcon>Details</ActionBtn>
                    </ActionRow>
                  </LeadItem>
                ))}
              </LeadsPanel>
            </Container>
          </PageBody>
        </Viewport>
        <ScrollBar>
          <ScrollArrow />
          <ScrollThumb />
          <ScrollArrow $down />
        </ScrollBar>
      </PageRow>

      <Taskbar>
        <Weather>
          <WeatherPic />
          <WeatherBadge>6</WeatherBadge>
          <WeatherText>26°C<small>Mostly clear</small></WeatherText>
        </Weather>
        <WinPic />
        <SearchPill>
          <Search size={22} strokeWidth={2} />
          <span>Search</span>
          <ScenePic />
        </SearchPill>
        <TaskViewPic />
        {APPS.map((a, idx) => (
          <AppIcon key={idx} $ml={a.ml} $tile={a.tile}>
            {a.i}
            {a.badge && <AppBadge><AvatarPic s={22} /></AppBadge>}
            {(a.dot || a.on) && <RunDot $on={a.on} />}
          </AppIcon>
        ))}
        <Tray>
          <TrayCell $w={20} $mr={20}><ChevronUp size={20} /></TrayCell>
          <TrayCell $w={24} $mr={17}><CloudPic /></TrayCell>
          <Lang>ENG<br />IN</Lang>
          <TrayCell $w={22} $mr={8}><WifiPic /></TrayCell>
          <TrayCell $w={22} $mr={8}><VolPic /></TrayCell>
          <TrayCell $w={22} $mr={0}><BatPic /></TrayCell>
          <Clock>10:13 PM<br />22-06-2025</Clock>
        </Tray>
      </Taskbar>
    </Shell>
  );
}
